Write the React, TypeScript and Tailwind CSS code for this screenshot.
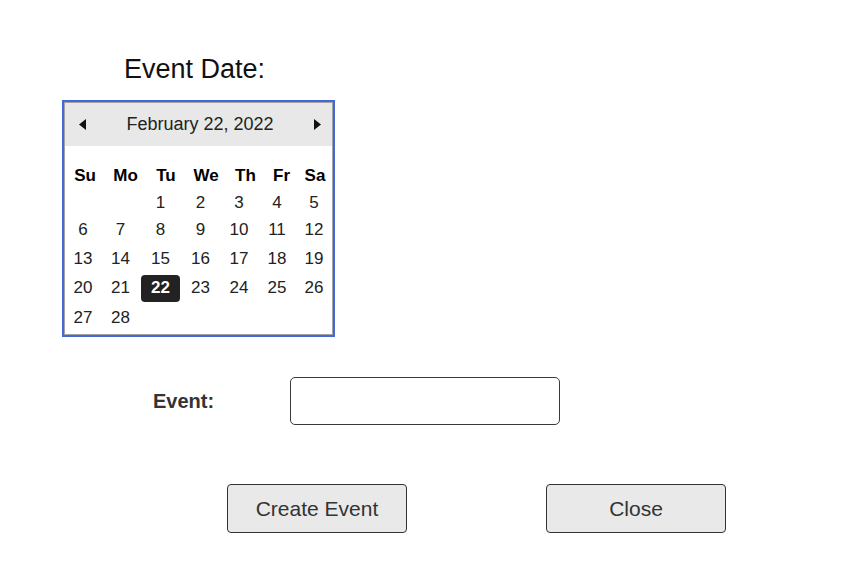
import * as React from 'react';

// Event form: date picker (Feb 2022), event name input, two actions.

const headCols = [
  { label: 'Su', w: 'w-[40px]' },
  { label: 'Mo', w: 'w-[41px]' },
  { label: 'Tu', w: 'w-[40px]' },
  { label: 'We', w: 'w-[40px]' },
  { label: 'Th', w: 'w-[39px]' },
  { label: 'Fr', w: 'w-[33px]' },
  { label: 'Sa', w: 'w-[34px]' },
];

const dayCols = ['w-[36px]', 'w-[39px]', 'w-[41px]', 'w-[39px]', 'w-[38px]', 'w-[38px]', 'w-[36px]'];

const weeks: { h: string; days: (number | null)[] }[] = [
  { h: 'h-[27px]', days: [null, null, 1, 2, 3, 4, 5] },
  { h: 'h-[28px]', days: [6, 7, 8, 9, 10, 11, 12] },
  { h: 'h-[29px]', days: [13, 14, 15, 16, 17, 18, 19] },
  { h: 'h-[30px]', days: [20, 21, 22, 23, 24, 25, 26] },
  { h: 'h-[29px]', days: [27, 28, null, null, null, null, null] },
];

const SELECTED = 22;

function Calendar() {
  return (
    <div className="ml-[62px] mt-[17px] w-[273px] border-2 border-[#4468da]">
      <div className="flex h-[233px] flex-col border border-[#a3a3a3] bg-white">
        <div className="flex h-[43px] items-center justify-between bg-[#e8e8e8] pb-[1px] pl-[14px] pr-[11px] text-[18px] text-[#222]">
          <svg width="7" height="11" viewBox="0 0 7 11">
            <path d="M7 0 L0 5.5 L7 11 Z" fill="#111" />
          </svg>
          <span>February 22, 2022</span>
          <svg width="7" height="11" viewBox="0 0 7 11">
            <path d="M0 0 L7 5.5 L0 11 Z" fill="#111" />
          </svg>
        </div>

        <div className="mt-[17px] flex h-[26px] items-center text-[17px] font-bold text-black">
          {headCols.map((c) => (
            <div key={c.label} className={`${c.w} text-center`}>
              {c.label}
            </div>
          ))}
        </div>

        {weeks.map((wk, i) => (
          <div key={i} className={`flex ${wk.h} items-stretch text-[17px] text-[#222]`}>
            {wk.days.map((d, j) =>
              d === SELECTED ? (
                <div key={j} className={`${dayCols[j]} flex items-center px-[1px]`}>
                  <div className="flex h-[27px] w-full items-center justify-center rounded-[4px] bg-[#222] font-bold text-white">
                    {d}
                  </div>
                </div>
              ) : (
                <div key={j} className={`${dayCols[j]} flex items-center justify-center`}>
                  {d ?? ''}
                </div>
              )
            )}
          </div>
        ))}
      </div>
    </div>
  );
}

export default function App() {
  return (
    <div className="h-[574px] w-[865px] overflow-hidden bg-white font-['Liberation_Sans',Arial,sans-serif]">
      <div className="pl-[124px] pt-[56px] text-[27px] leading-[27px] text-[#111]">Event Date:</div>

      <Calendar />

      <div className="mt-[40px] flex h-[48px] items-center">
        <label className="ml-[153px] w-[137px] text-[20px] font-bold text-[#333]">Event:</label>
        <input
          type="text"
          className="h-[48px] w-[270px] rounded-[5px] border border-[#3a3a3a] bg-white px-3 text-[18px] outline-none"
        />
      </div>

      <div className="ml-[227px] mt-[59px] flex gap-[139px]">
        <button className="h-[49px] w-[180px] rounded-[4px] border border-[#333] bg-[#e9e9e9] text-[21px] text-[#333]">
          Create Event
        </button>
        <button className="h-[49px] w-[180px] rounded-[4px] border border-[#333] bg-[#e9e9e9] text-[21px] text-[#333]">
          Close
        </button>
      </div>
    </div>
  );
}
